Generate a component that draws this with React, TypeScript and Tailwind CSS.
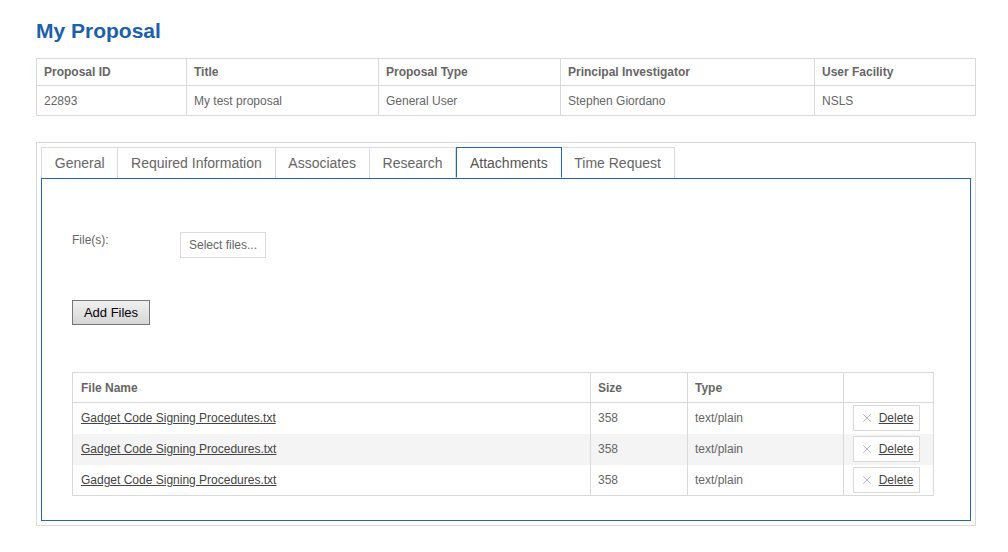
import { X } from "lucide-react";

const info = [
  { head: "Proposal ID", value: "22893", w: "w-[150px]" },
  { head: "Title", value: "My test proposal", w: "w-[192px]" },
  { head: "Proposal Type", value: "General User", w: "w-[182px]" },
  { head: "Principal Investigator", value: "Stephen Giordano", w: "w-[254px]" },
  { head: "User Facility", value: "NSLS", w: "" },
];

const tabs = ["General", "Required Information", "Associates", "Research", "Attachments", "Time Request"];

const files = [
  { name: "Gadget Code Signing Procedutes.txt", size: 358, type: "text/plain" },
  { name: "Gadget Code Signing Procedures.txt", size: 358, type: "text/plain" },
  { name: "Gadget Code Signing Procedures.txt", size: 358, type: "text/plain" },
];

export default function App() {
  return (
    <div className="min-h-[552px] bg-white px-[36px] pt-[18px] text-[12px] text-[#666] font-['Liberation_Sans',Arial,sans-serif]">
      <h1 className="text-[21px] font-bold leading-[26px] text-[#1d5fa8]">My Proposal</h1>

      {/* proposal summary */}
      <table className="mt-[14px] w-[940px] border-collapse border border-[#d9d9d9]">
        <thead>
          <tr className="h-[27px]">
            {info.map(c => (
              <th key={c.head} className={`${c.w} border border-[#d9d9d9] px-[7px] text-left font-bold`}>{c.head}</th>
            ))}
          </tr>
        </thead>
        <tbody>
          <tr className="h-[30px]">
            {info.map(c => (
              <td key={c.head} className="border border-[#d9d9d9] px-[7px]">{c.value}</td>
            ))}
          </tr>
        </tbody>
      </table>

      {/* tab box */}
      <div className="mt-[26px] w-[940px] border border-[#d9d9d9] p-[4px]">
        <div className="flex">
          {tabs.map(t => {
            const active = t === "Attachments";
            return (
              <div
                key={t}
                className={
                  active
                    ? "relative z-10 -mb-px h-[31px] border border-[#1f6aad] border-b-white bg-white px-[12.75px] pt-[5px] text-[14px] text-[#555]"
                    : "-ml-px first:ml-0 h-[31px] border border-[#d9d9d9] border-b-0 bg-white px-[12.75px] pt-[5px] text-[14px] text-[#666]"
                }
              >
                {t}
              </div>
            );
          })}
        </div>
        <div className="h-[343px] border border-[#1f6aad] px-[30px] pt-[49px]">
          <div className="flex items-start">
            <span className="mt-[3px] w-[108px] text-[12px] text-[#666]">File(s):</span>
            <button className="mt-[4px] h-[26px] w-[86px] border border-[#dcdcdc] bg-white text-[12px] text-[#666]">Select files...</button>
          </div>
          <button className="mt-[42px] h-[25px] w-[78px] border border-[#777] bg-gradient-to-b from-[#f0f0f0] to-[#d6d6d6] text-[13px] text-black">
            Add Files
          </button>

          <table className="mt-[47px] w-[862px] border-collapse border border-[#d9d9d9]">
            <thead>
              <tr className="h-[30px]">
                <th className="w-[518px] border border-[#d9d9d9] px-[8px] text-left font-bold">File Name</th>
                <th className="w-[97px] border border-[#d9d9d9] px-[7px] text-left font-bold">Size</th>
                <th className="w-[156px] border border-[#d9d9d9] px-[7px] text-left font-bold">Type</th>
                <th className="border border-[#d9d9d9]"></th>
              </tr>
            </thead>
            <tbody>
              {files.map((f, i) => (
                <tr key={i} className={i === 1 ? "h-[31px] bg-[#f4f4f4]" : "h-[31px] bg-white"}>
                  <td className="border-l border-r border-[#d9d9d9] px-[8px]">
                    <a href="#" className="text-[#444] underline">{f.name}</a>
                  </td>
                  <td className="border-r border-[#d9d9d9] px-[7px]">{f.size}</td>
                  <td className="border-r border-[#d9d9d9] px-[7px]">{f.type}</td>
                  <td className="border-r border-[#d9d9d9] px-[9px]">
                    <button className="flex h-[26px] w-[67px] items-center justify-center gap-[5px] border border-[#d9d9d9] bg-white text-[12px] text-[#444]">
                      <X size={14} strokeWidth={1} className="text-[#888]" />
                      <span className="underline">Delete</span>
                    </button>
                  </td>
                </tr>
              ))}
            </tbody>
          </table>
        </div>
      </div>
    </div>
  );
}
